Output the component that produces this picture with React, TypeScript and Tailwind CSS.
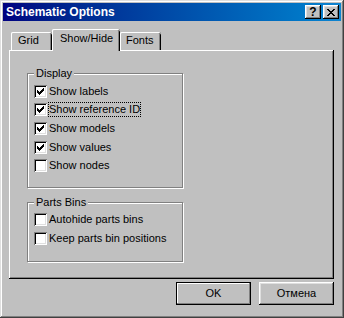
import React from 'react';

// Win9x style "Schematic Options" dialog

const FONT = "font-['Liberation_Sans',Arial,sans-serif]";

function Check({ checked }: { checked?: boolean }) {
  return (
    <span className="flex h-[13px] w-[13px] shrink-0 items-center justify-center bg-white shadow-[inset_1px_1px_#808080,inset_-1px_-1px_#fff,inset_2px_2px_#000,inset_-2px_-2px_#dfdfdf]">
      {checked && (
        <svg width="7" height="7" viewBox="0 0 7 7" shapeRendering="crispEdges">
          <path
            d="M6 0h1v1h-1z M5 1h2v1h-2z M0 2h1v1h-1z M4 2h3v1h-3z M0 3h2v1h-2z M3 3h3v1h-3z M0 4h5v1h-5z M1 5h3v1h-3z M2 6h1v1h-1z"
            fill="#000"
          />
        </svg>
      )}
    </span>
  );
}

function Row({ label, checked, focused }: { label: string; checked?: boolean; focused?: boolean }) {
  return (
    <div className="flex h-[13px] items-center">
      <Check checked={checked} />
      <span
        className={`ml-[1px] border px-0 text-[11px] leading-[13px] text-black ${
          focused ? 'border-dotted border-black' : 'border-transparent'
        }`}
      >
        {label}
      </span>
    </div>
  );
}

function GroupBox({ title, className, children }: { title: string; className: string; children: React.ReactNode }) {
  return (
    <div
      className={`relative w-[156px] border border-[#808080] pl-[6px] shadow-[inset_1px_1px_#fff,1px_1px_#fff] ${className}`}
    >
      <span className="absolute -top-[7px] left-[6px] bg-[#c0c0c0] px-[2px] text-[11px] leading-[13px] text-black">
        {title}
      </span>
      {children}
    </div>
  );
}

function TitleButton({ children }: { children: React.ReactNode }) {
  return (
    <span className="flex h-[14px] w-[16px] items-center justify-center bg-[#c0c0c0] shadow-[inset_-1px_-1px_#000,inset_1px_1px_#fff,inset_-2px_-2px_#808080,inset_2px_2px_#dfdfdf]">
      {children}
    </span>
  );
}

export default function App() {
  return (
    <div
      className={`flex h-[318px] w-[344px] flex-col bg-[#c0c0c0] p-[3px] shadow-[inset_-1px_-1px_#404040,inset_1px_1px_#dfdfdf,inset_-2px_-2px_#808080,inset_2px_2px_#fff] ${FONT}`}
    >
      {/* Title bar */}
      <div className="flex h-[18px] items-center bg-gradient-to-r from-[#000080] to-[#1084d0] pl-[3px] pr-[2px]">
        <span className="text-[12px] font-bold leading-[14px] text-white">Schematic Options</span>
        <div className="ml-auto flex gap-[2px]">
          <TitleButton>
            <span className="text-[12px] font-bold leading-[12px] text-black">?</span>
          </TitleButton>
          <TitleButton>
            <svg width="8" height="7" viewBox="0 0 8 7" shapeRendering="crispEdges">
              <path
                d="M0 0h2v1h-2z M6 0h2v1h-2z M1 1h2v1h-2z M5 1h2v1h-2z M2 2h4v1h-4z M3 3h2v1h-2z M2 4h4v1h-4z M1 5h2v1h-2z M5 5h2v1h-2z M0 6h2v1h-2z M6 6h2v1h-2z"
                fill="#000"
              />
            </svg>
          </TitleButton>
        </div>
      </div>

      {/* Tabs + panel */}
      <div className="flex flex-col pl-[6px] pr-[7px] pt-[8px]">
        <div className="relative z-10 -mb-px flex items-end pl-[2px] text-[11px] leading-[13px] text-black">
          <div className="mb-px h-[18px] w-[41px] rounded-tl-[2px] rounded-tr-[2px] pl-[7px] pt-[2px] shadow-[inset_1px_0_#fff,inset_0_1px_#fff,inset_-1px_0_#000,inset_-2px_0_#808080]">
            Grid
          </div>
          <div className="h-[22px] w-[68px] rounded-tl-[2px] rounded-tr-[2px] bg-[#c0c0c0] pl-[8px] pt-[3px] shadow-[inset_1px_0_#fff,inset_0_1px_#fff,inset_-1px_0_#000,inset_-2px_0_#808080]">
            Show/Hide
          </div>
          <div className="mb-px h-[18px] w-[41px] rounded-tl-[2px] rounded-tr-[2px] pl-[6px] pt-[2px] shadow-[inset_1px_0_#fff,inset_0_1px_#fff,inset_-1px_0_#000,inset_-2px_0_#808080]">
            Fonts
          </div>
        </div>

        <div className="h-[229px] pl-[18px] pt-[23px] shadow-[inset_-1px_-1px_#000,inset_1px_1px_#fff,inset_-2px_-2px_#808080]">
          <GroupBox title="Display" className="h-[115px] pt-[11px]">
            <div className="flex flex-col">
              <Row label="Show labels" checked />
              <div className="mt-[5px]">
                <Row label="Show reference ID" checked focused />
              </div>
              <div className="mt-[6px]">
                <Row label="Show models" checked />
              </div>
              <div className="mt-[6px]">
                <Row label="Show values" checked />
              </div>
              <div className="mt-[5px]">
                <Row label="Show nodes" />
              </div>
            </div>
          </GroupBox>

          <GroupBox title="Parts Bins" className="mt-[14px] h-[60px] pt-[10px]">
            <div className="flex flex-col">
              <Row label="Autohide parts bins" />
              <div className="mt-[6px]">
                <Row label="Keep parts bin positions" />
              </div>
            </div>
          </GroupBox>
        </div>
      </div>

      {/* Buttons */}
      <div className="mt-[3px] flex justify-end gap-[8px] pr-[7px] text-[11px] leading-[13px] text-black">
        <button className="h-[23px] w-[75px] bg-[#c0c0c0] shadow-[inset_0_0_0_1px_#000,inset_-2px_-2px_#808080,inset_2px_2px_#fff]">
          OK
        </button>
        <button className="h-[23px] w-[75px] bg-[#c0c0c0] shadow-[inset_-1px_-1px_#000,inset_1px_1px_#fff,inset_-2px_-2px_#808080,inset_2px_2px_#dfdfdf]">
          Отмена
        </button>
      </div>
    </div>
  );
}
